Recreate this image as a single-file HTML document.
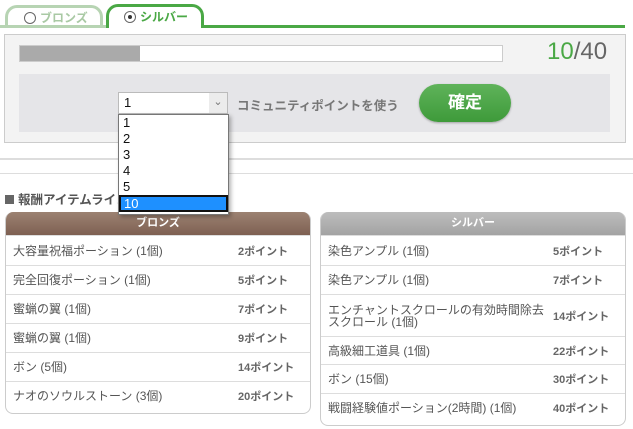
<!DOCTYPE html>
<html><head><meta charset="utf-8">
<style>
*{margin:0;padding:0;box-sizing:border-box}
body{width:633px;height:429px;overflow:hidden;background:#fff;position:relative;font-family:"Liberation Sans","Noto Sans CJK JP",sans-serif;color:#555}
.a{position:absolute}
.tab{position:absolute;top:5px;height:23px;border:3px solid #aac8a6;border-bottom:none;border-radius:12px 12px 0 0;background:#fff;font-size:12px;font-weight:bold;line-height:20px;padding-left:16px}
.rad{display:inline-block;width:12px;height:12px;border:1.5px solid #666;border-radius:50%;vertical-align:-2px;margin-right:4px;position:relative;background:#fff}
.tbl{position:absolute;top:212px;width:306px;border:1px solid #ccc;border-top:none;border-radius:8px;overflow:hidden;background:#fff}
.th{height:23px;color:#fff;font-size:11px;font-weight:bold;text-align:center;line-height:22px}
.row{display:flex;align-items:center;border-top:1px solid #ddd;font-size:12px;color:#555}
.row .n{flex:1;padding-left:7px;line-height:12px}
.row .p{width:72px;font-weight:bold;color:#666;font-size:11px}
.dd div{height:16px;line-height:16px;padding-left:4px;font-size:13px;color:#111}
</style></head><body>
<div class="tab" style="left:5px;width:98px;color:#a9c9a4;border-color:#b7d4b3;padding-left:16px"><span class="rad"></span>ブロンズ</div>
<div class="tab" style="left:106px;width:98px;top:4px;height:24px;border-color:#4aa845;color:#4aa845;padding-left:15px"><span class="rad"><span style="position:absolute;left:2.5px;top:2.5px;width:4px;height:4px;border-radius:50%;background:#333"></span></span>シルバー</div>
<div class="a" style="left:0;top:25px;width:106px;height:3px;background:#b7d4b3"></div>
<div class="a" style="left:203px;top:25px;width:422px;height:3px;background:#4aa845"></div>
<div class="a" style="left:4px;top:34px;width:622px;height:109px;background:#f3f3f3;border:1px solid #ccc"></div>
<div class="a" style="left:19px;top:45px;width:484px;height:17px;background:#fff;border:1px solid #ccc"><div style="width:120px;height:15px;background:#aaa"></div></div>
<div class="a" style="left:547px;top:38px;font-size:24px;color:#666;line-height:28px"><span style="color:#4aa845">10</span>/40</div>
<div class="a" style="left:19px;top:74px;width:591px;height:58px;background:#e5e5e8"></div>
<div class="a" style="left:118px;top:92px;width:110px;height:22px;background:#fff;border:1px solid #bbb;font-size:13px;line-height:20px;padding-left:5px;color:#111">1<div style="position:absolute;right:0;top:0;width:18px;height:20px;background:#ececec;color:#777;font-size:11px;text-align:center;line-height:18px">⌄</div></div>
<div class="a" style="left:237px;top:95px;font-size:12.5px;color:#777;font-weight:bold;white-space:nowrap">コミュニティポイントを使う</div>
<div class="a" style="left:419px;top:84px;width:92px;height:38px;border-radius:19px;background:linear-gradient(#5fb35a,#3e9a3a);box-shadow:0 1px 2px rgba(0,0,0,.3);color:#fff;font-size:17px;font-weight:bold;text-align:center;line-height:38px">確定</div>
<div class="a" style="left:0;top:158px;width:633px;height:2px;background:#ddd"></div>
<div class="a" style="left:0;top:173px;width:633px;height:1px;background:#ddd"></div>
<div class="a" style="left:5px;top:189px;font-size:12.5px;color:#555;font-weight:bold"><span style="display:inline-block;width:9px;height:9px;background:#666;margin-right:4px"></span>報酬アイテムライン</div>
<div class="tbl" style="left:5px;height:202px">
<div class="th" style="background:linear-gradient(#9c8272,#7e6052)">ブロンズ</div>
<div class="row" style="height:30px"><span class="n">大容量祝福ポーション (1個)</span><span class="p">2ポイント</span></div>
<div class="row" style="height:29px"><span class="n">完全回復ポーション (1個)</span><span class="p">5ポイント</span></div>
<div class="row" style="height:29px"><span class="n">蜜蝋の翼 (1個)</span><span class="p">7ポイント</span></div>
<div class="row" style="height:29px"><span class="n">蜜蝋の翼 (1個)</span><span class="p">9ポイント</span></div>
<div class="row" style="height:29px"><span class="n">ボン (5個)</span><span class="p">14ポイント</span></div>
<div class="row" style="height:29px"><span class="n">ナオのソウルストーン (3個)</span><span class="p">20ポイント</span></div>
</div>
<div class="tbl" style="left:320px;width:306px;height:214px">
<div class="th" style="background:linear-gradient(#bdbdbd,#a3a3a3)">シルバー</div>
<div class="row" style="height:30px"><span class="n">染色アンプル (1個)</span><span class="p">5ポイント</span></div>
<div class="row" style="height:29px"><span class="n">染色アンプル (1個)</span><span class="p">7ポイント</span></div>
<div class="row" style="height:42px"><span class="n">エンチャントスクロールの有効時間除去<br>スクロール (1個)</span><span class="p">14ポイント</span></div>
<div class="row" style="height:28px"><span class="n">高級細工道具 (1個)</span><span class="p">22ポイント</span></div>
<div class="row" style="height:29px"><span class="n">ボン (15個)</span><span class="p">30ポイント</span></div>
<div class="row" style="height:29px"><span class="n">戦闘経験値ポーション(2時間) (1個)</span><span class="p">40ポイント</span></div>
</div>
<div class="a dd" style="left:118px;top:114px;width:111px;height:101px;background:#fff;border:1px solid #777;box-shadow:2px 2px 4px rgba(0,0,0,.3)">
<div>1</div><div>2</div><div>3</div><div>4</div><div>5</div>
<div style="background:#1e90ff;color:#fff;border:2px solid #111;height:17px;line-height:13px;padding-left:3px">10</div>
</div>
</body></html>
